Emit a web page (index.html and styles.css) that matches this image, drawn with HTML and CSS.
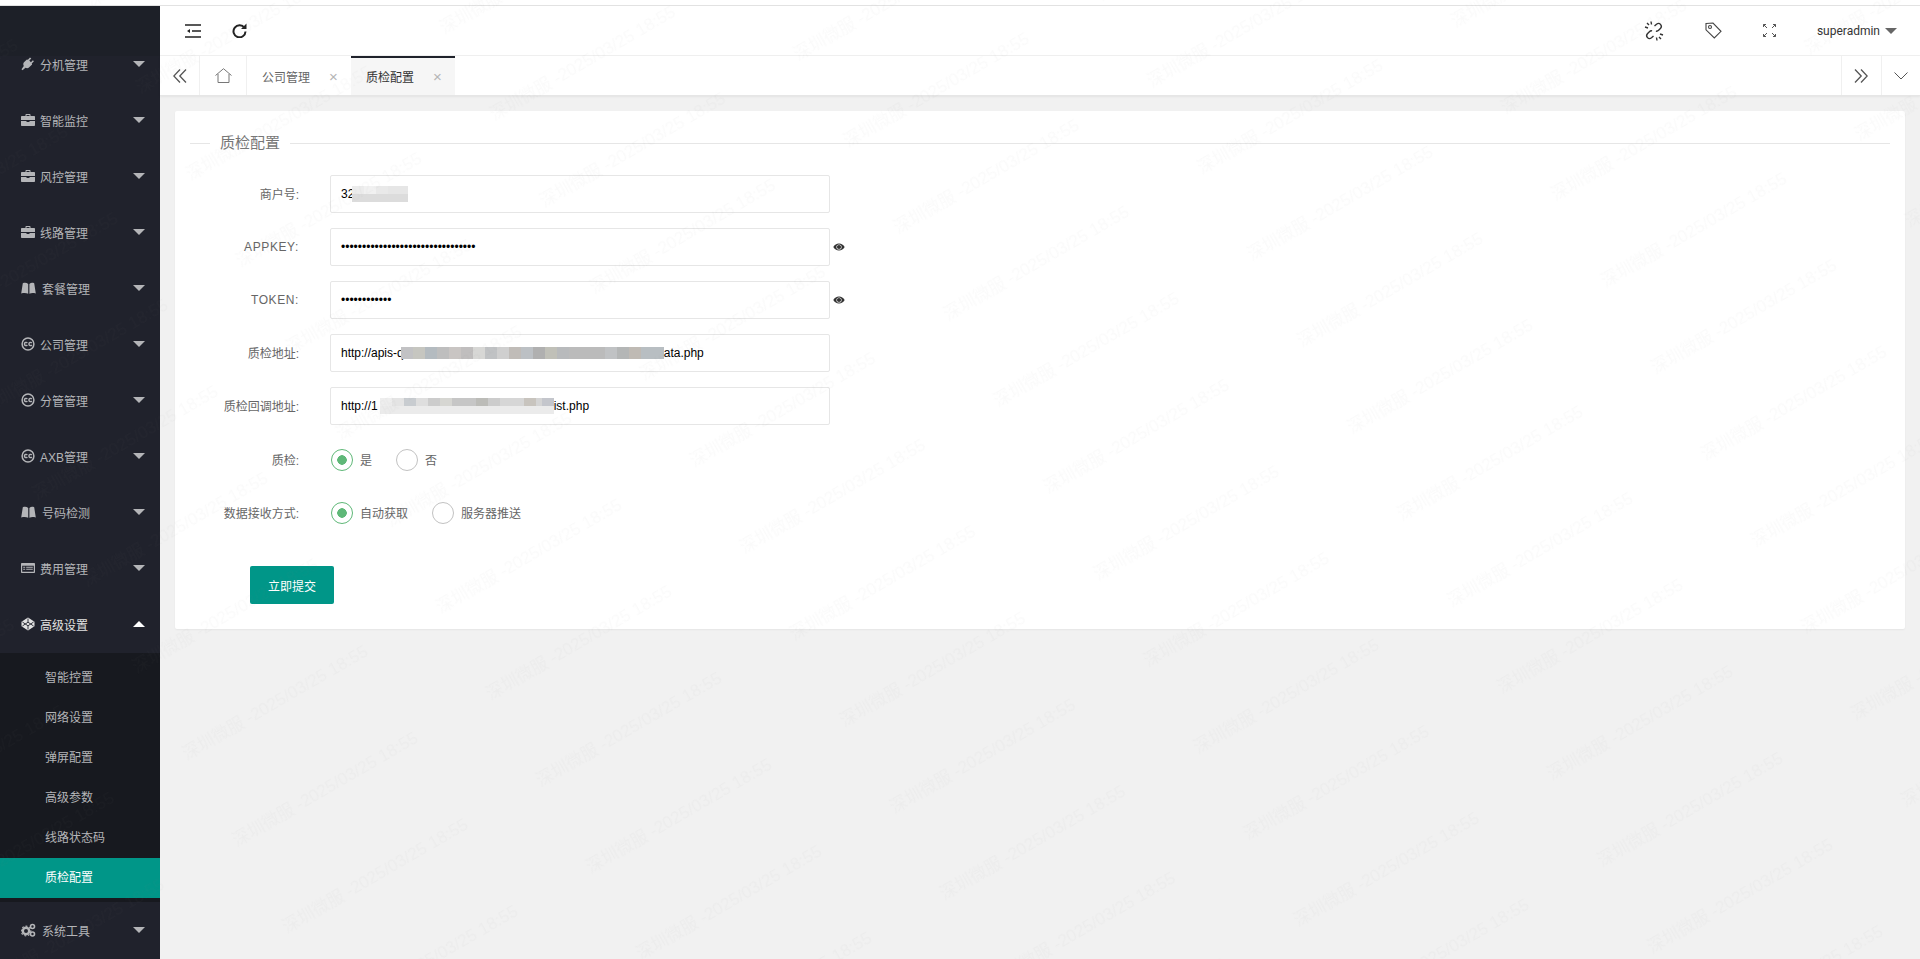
FILE: index.html
```html
<!DOCTYPE html>
<html lang="zh-CN">
<head>
  <meta charset="UTF-8">
  <title>质检配置</title>
  <link rel="stylesheet" href="styles.css">
</head>
<body>

<svg class="sprites" aria-hidden="true">
  <symbol id="i-plug" viewBox="0 0 14 14">
    <path d="M9 .6 6.9 2.7l-1-.3L3 5.3c-.9 1-.9 2.6-.2 3.6L.5 12.3l1 1 3-2.6c1.1.7 2.700.6 3.700-.4l2.900-2.900-.3-1 2.100-2.200-1-1-2 2-1.600-1.600 2-2z" fill="currentColor"/>
  </symbol>
  <symbol id="i-case" viewBox="0 0 14 14">
    <path d="M4.500 3V1.700c0-.4.300-.7.700-.7h3.600c.4 0 .7.300.7.700V3H13c.6 0 1 .4 1 1v3H0V4c0-.6.400-1 1-1zM5.500 3h3V2h-3zM0 8h5.500v1h3V8H14v4c0 .6-.4 1-1 1H1c-.6 0-1-.4-1-1z" fill="currentColor"/>
  </symbol>
  <symbol id="i-book" viewBox="0 0 15 14">
    <path d="M.2 12.500 1.800 2.300C3.600 1.500 5.800 1.700 7.200 3v9.800c-1.800-.9-4.300-1-7-.3zM8.400 3c1.300-1.300 3-1.500 4.800-.7l1.600 10.200c-2.600-.7-4.600-.6-6.400.3z" fill="currentColor"/>
  </symbol>
  <symbol id="i-cc" viewBox="0 0 14 14">
    <circle cx="7" cy="7" r="5.900" fill="none" stroke="currentColor" stroke-width="1.500"/>
    <path d="M6.300 6c-.8-1-2.900-.7-2.900 1s2.100 2 2.900 1M10.800 6c-.8-1-2.900-.7-2.900 1s2.100 2 2.900 1" fill="none" stroke="currentColor" stroke-width="1.400"/>
  </symbol>
  <symbol id="i-list" viewBox="0 0 14 14">
    <path d="M1 2h12c.6 0 1 .4 1 1v8c0 .6-.4 1-1 1H1c-.6 0-1-.4-1-1V3c0-.6.400-1 1-1zm.2 2.800v6h11.600v-6zm1 1h2v1h-2zm3 0h6.600v1H5.200zm-3 2h2v1h-2zm3 0h6.600v1H5.200z" fill="currentColor" fill-rule="evenodd"/>
  </symbol>
  <symbol id="i-pen" viewBox="0 0 14 14">
    <path d="M7 .5 13.500 4.700v4.600L7 13.500.5 9.300V4.700z" fill="currentColor"/>
    <path d="M7 1.500v3.700M7 8.800v3.700M1.400 5 7 8.800 12.600 5M1.400 9 7 5.200 12.600 9" fill="none" stroke="#20222c" stroke-width=".9"/>
  </symbol>
  <symbol id="i-cogs" viewBox="0 0 15 14">
    <circle cx="5" cy="8" r="3.200" fill="none" stroke="currentColor" stroke-width="2.400"/>
    <circle cx="5" cy="8" r="4.800" fill="none" stroke="currentColor" stroke-width="1.200" stroke-dasharray="1.800 1.800"/>
    <circle cx="11.500" cy="3.500" r="2" fill="none" stroke="currentColor" stroke-width="1.600"/>
    <circle cx="11.500" cy="11" r="2" fill="none" stroke="currentColor" stroke-width="1.600"/>
  </symbol>
  <symbol id="i-eye" viewBox="0 0 12 12">
    <path d="M.3 6C1.500 3.800 3.600 2.500 6 2.500S10.500 3.800 11.700 6c-1.200 2.200-3.300 3.500-5.700 3.500S1.500 8.200.3 6zm3.100 0a2.600 2.600 0 1 0 5.200 0 2.600 2.600 0 1 0-5.200 0z" fill="currentColor" fill-rule="evenodd"/>
    <circle cx="6" cy="6" r="2.100" fill="currentColor"/>
  </symbol>
</svg>

<div class="top-strip"></div>

<div class="app">
  <aside class="sidebar">
    <ul class="nav">
      <li class="nav-item"><svg class="nav-icon"><use href="#i-plug"/></svg>分机管理<i class="caret"></i></li>
      <li class="nav-item"><svg class="nav-icon"><use href="#i-case"/></svg>智能监控<i class="caret"></i></li>
      <li class="nav-item"><svg class="nav-icon"><use href="#i-case"/></svg>风控管理<i class="caret"></i></li>
      <li class="nav-item"><svg class="nav-icon"><use href="#i-case"/></svg>线路管理<i class="caret"></i></li>
      <li class="nav-item"><svg class="nav-icon wide"><use href="#i-book"/></svg>套餐管理<i class="caret"></i></li>
      <li class="nav-item"><svg class="nav-icon"><use href="#i-cc"/></svg>公司管理<i class="caret"></i></li>
      <li class="nav-item"><svg class="nav-icon"><use href="#i-cc"/></svg>分管管理<i class="caret"></i></li>
      <li class="nav-item"><svg class="nav-icon"><use href="#i-cc"/></svg>AXB管理<i class="caret"></i></li>
      <li class="nav-item"><svg class="nav-icon wide"><use href="#i-book"/></svg>号码检测<i class="caret"></i></li>
      <li class="nav-item"><svg class="nav-icon"><use href="#i-list"/></svg>费用管理<i class="caret"></i></li>
      <li class="nav-item open"><svg class="nav-icon"><use href="#i-pen"/></svg>高级设置<i class="caret up"></i></li>
      <li>
        <ul class="subnav">
          <li class="subnav-item">智能控置</li>
          <li class="subnav-item">网络设置</li>
          <li class="subnav-item">弹屏配置</li>
          <li class="subnav-item">高级参数</li>
          <li class="subnav-item">线路状态码</li>
          <li class="subnav-item active">质检配置</li>
        </ul>
      </li>
      <li class="nav-item"><svg class="nav-icon wide"><use href="#i-cogs"/></svg>系统工具<i class="caret"></i></li>
    </ul>
  </aside>

  <main class="main">
    <header class="header">
      <svg class="tool first" width="16" height="14" viewBox="0 0 16 14" fill="none" stroke="#222" stroke-width="1.500">
        <path d="M0 1h16M7 7h9M0 13h16"/>
        <path d="M5 5 2 7l3 2z" fill="#222" stroke="none"/>
      </svg>
      <svg class="tool refresh" width="15" height="15" viewBox="0 0 15 15" fill="none" stroke="#222" stroke-width="2">
        <path d="M12.500 5A6 6 0 1 0 13.500 8.500"/>
        <path d="M14.500.5V6H9z" fill="#222" stroke="none"/>
      </svg>
      <div class="spacer"></div>
      <svg class="tool" width="20" height="20" viewBox="0 0 20 20" fill="none" stroke="#333" stroke-width="1.400">
        <path d="M10.500 5 12.500 3.200c1.300-1 3-.9 4 .2s1.100 2.700.1 3.900L14.600 9.300c-.8.800-1.800 1-2.700.8"/>
        <path d="M9.500 15 7.500 16.800c-1.300 1-3 .9-4-.2s-1.100-2.700-.1-3.900l2-2c.8-.8 1.800-1 2.700-.8"/>
        <path d="M7 .5 7.500 3.500M1 6l3 1M13 19.500l-.5-3M19 14l-3-1M3 2l2 2M17 18l-2-2"/>
      </svg>
      <svg class="tool tag" width="17" height="17" viewBox="0 0 17 17" fill="none" stroke="#444" stroke-width="1.100">
        <path d="M1 1.500 8 1l8 8.300L9.300 16 1 7.800z"/>
        <circle cx="5" cy="5" r="1.500"/>
      </svg>
      <svg class="tool full" width="13" height="13" viewBox="0 0 13 13" fill="none" stroke="#555" stroke-width="1">
        <path d="M.5 3V.5H3M.5.5 4 4M10 .5h2.500V3M12.500.5 9 4M.5 10v2.500H3M.5 12.500 4 9M10 12.500h2.500V10M12.500 12.500 9 9"/>
      </svg>
      <span class="user">superadmin<i class="user-caret"></i></span>
    </header>

    <nav class="tabs">
      <div class="tab-btn">
        <svg width="14" height="14" viewBox="0 0 14 14" fill="none" stroke="#555" stroke-width="1.300"><path d="M7 .5.800 7 7 13.500M13 .5 6.800 7l6.200 6.500"/></svg>
      </div>
      <div class="tab-btn home">
        <svg width="17" height="15" viewBox="0 0 17 15" fill="none" stroke="#777" stroke-width="1"><path d="M.5 7.500 8.500.7l8 6.800M3 6v8.500h11V6"/></svg>
      </div>
      <div class="tab">公司管理<span class="tab-close">×</span></div>
      <div class="tab active">质检配置<span class="tab-close">×</span></div>
      <div class="spacer"></div>
      <div class="tab-btn right">
        <svg class="more" width="14" height="14" viewBox="0 0 14 14" fill="none" stroke="#555" stroke-width="1.300"><path d="M7 .5 13.200 7 7 13.500M1 .5 7.200 7 1 13.500"/></svg>
      </div>
      <div class="tab-btn right last">
        <svg width="14" height="8" viewBox="0 0 14 8" fill="none" stroke="#555" stroke-width="1"><path d="M.5.500 7 7 13.500.5"/></svg>
      </div>
    </nav>

    <section class="content">
      <div class="card">
        <fieldset class="panel">
          <legend class="panel-title">质检配置</legend>
          <form class="form">
            <div class="form-row">
              <label class="form-label cjk">商户号:</label>
              <div class="input">32<span class="mosaic m-short"></span></div>
            </div>
            <div class="form-row">
              <label class="form-label latin">APPKEY:</label>
              <input class="input" type="password" value="aaaaaaaaaaaaaaaaaaaaaaaaaaaaaaaa">
              <svg class="eye"><use href="#i-eye"/></svg>
            </div>
            <div class="form-row">
              <label class="form-label latin">TOKEN:</label>
              <input class="input" type="password" value="aaaaaaaaaaaa">
              <svg class="eye"><use href="#i-eye"/></svg>
            </div>
            <div class="form-row">
              <label class="form-label cjk">质检地址:</label>
              <div class="input">http://apis-q<span class="mosaic m-long"></span>ata.php</div>
            </div>
            <div class="form-row">
              <label class="form-label cjk">质检回调地址:</label>
              <div class="input">http://1<span class="mosaic m-mid"></span>ist.php</div>
            </div>
            <div class="form-row radios">
              <label class="form-label">质检:</label>
              <span class="radio on">是</span>
              <span class="radio">否</span>
            </div>
            <div class="form-row radios">
              <label class="form-label">数据接收方式:</label>
              <span class="radio on">自动获取</span>
              <span class="radio">服务器推送</span>
            </div>
            <button class="submit" type="button">立即提交</button>
          </form>
        </fieldset>
      </div>
    </section>
  </main>
</div>

<svg class="watermark" aria-hidden="true">
  <pattern id="wm" width="293" height="100" patternUnits="userSpaceOnUse" patternTransform="translate(1100.500 584.700) rotate(-30)">
    <text class="wm-text" x="0" y="95">深圳微服 -2025/03/25 18:55</text>
  </pattern>
  <rect width="100%" height="100%" fill="url(#wm)"/>
</svg>

</body>
</html>
```

FILE: styles.css
```css
* {
  box-sizing: border-box;
}
html, body {
  height: 100%;
}
body {
  margin: 0;
  display: flex;
  flex-direction: column;
  overflow: hidden;
  background: #fff;
  color: #666;
  font-family: "Liberation Sans", "Noto Sans CJK SC", sans-serif;
  font-size: 12px;
}
ul {
  list-style: none;
  margin: 0;
  padding: 0;
}
.sprites {
  position: absolute;
  width: 0;
  height: 0;
}
.spacer {
  flex: 1;
}
.top-strip {
  height: 6px;
  flex: none;
  border-bottom: 1px solid #e2e2e2;
}
.app {
  flex: 1;
  display: flex;
  min-height: 0;
}

/* sidebar */
.sidebar {
  width: 160px;
  flex: none;
  padding-top: 30px;
  overflow: hidden;
  background: linear-gradient(#1d2028 50px, #20222c 50px);
  color: #b4b5b8;
}
.nav-item {
  height: 56px;
  display: flex;
  align-items: center;
  padding: 0 15px 0 21px;
}
.nav-item.open {
  color: #e2e2e2;
}
.nav-icon {
  width: 14px;
  height: 14px;
  margin-right: 5px;
  flex: none;
}
.nav-icon.wide {
  width: 15px;
  margin-right: 6px;
}
.caret {
  margin-left: auto;
  width: 0;
  height: 0;
  border-left: 6px solid transparent;
  border-right: 6px solid transparent;
  border-top: 6px solid currentColor;
}
.caret.up {
  border-top: 0;
  border-bottom: 6px solid #fff;
}
.subnav {
  margin-top: 1px;
  padding: 5px 0 4px;
  background: #17191f;
}
.subnav-item {
  height: 40px;
  line-height: 40px;
  padding-left: 45px;
}
.subnav-item.active {
  background: #009688;
  color: #fff;
}

/* header and tabs */
.main {
  flex: 1;
  display: flex;
  flex-direction: column;
  min-width: 0;
}
.header {
  height: 50px;
  flex: none;
  display: flex;
  align-items: center;
  padding-right: 23px;
  border-bottom: 1px solid #f0f0f0;
  color: #333;
}
.tool {
  flex: none;
}
.tool.first {
  margin-left: 25px;
}
.tool.refresh {
  margin-left: 31px;
}
.tool.tag {
  margin-left: 41px;
}
.tool.full {
  margin-left: 41px;
}
.user {
  display: flex;
  align-items: center;
  margin-left: 41px;
  font-family: Roboto, "Liberation Sans", sans-serif;
}
.user-caret {
  width: 0;
  height: 0;
  margin-left: 5px;
  border-left: 6px solid transparent;
  border-right: 6px solid transparent;
  border-top: 6px solid #666;
}
.tabs {
  height: 40px;
  flex: none;
  display: flex;
  border-bottom: 1px solid #e6e6e6;
  box-shadow: 0 1px 2px rgba(0, 0, 0, 0.06);
  position: relative;
}
.tab-btn {
  width: 40px;
  flex: none;
  display: flex;
  align-items: center;
  justify-content: center;
  border-right: 1px solid #f0f0f0;
}
.tab-btn.home {
  width: 47px;
}
.tab-btn.right {
  border-right: 0;
  border-left: 1px solid #f0f0f0;
}
.tab-btn.last {
  width: 39px;
}
.more {
  margin-right: 2px;
}
.tab {
  width: 104px;
  flex: none;
  display: flex;
  align-items: center;
  padding-left: 15px;
  border-top: 2px solid transparent;
  white-space: nowrap;
}
.tab.active {
  background: #f6f6f6;
  border-top-color: #1f222b;
  color: #333;
}
.tab-close {
  margin-left: 19px;
  color: #b5b5b5;
  font-size: 15px;
  line-height: 1;
}

/* form card */
.content {
  flex: 1;
  padding: 15px;
  background: #f1f1f1;
}
.card {
  height: 518px;
  padding: 20px 15px 0;
  border-radius: 2px;
  background: #fff;
  box-shadow: 0 1px 2px rgba(0, 0, 0, 0.05);
}
.panel {
  margin: 0;
  padding: 20px 0 0;
  border: 0;
  border-top: 1px solid #e6e6e6;
}
.panel-title {
  margin-left: 20px;
  padding: 0 10px;
  font-size: 15px;
  line-height: 24px;
  color: #777;
}
.form-row {
  height: 38px;
  margin-bottom: 15px;
  display: flex;
  align-items: center;
}
.form-label {
  width: 109px;
  margin-right: 31px;
  flex: none;
  text-align: right;
}
.form-label.cjk {
  padding-bottom: 2px;
}
.form-label.latin {
  letter-spacing: 0.6px;
}
.input {
  width: 500px;
  height: 38px;
  padding: 0 10px;
  display: flex;
  align-items: center;
  border: 1px solid #e6e6e6;
  border-radius: 2px;
  outline: none;
  background: #fff;
  color: #000;
  font-family: inherit;
  font-size: 12px;
  white-space: pre;
}
.mosaic {
  display: block;
  flex: none;
}
.m-short {
  width: 56px;
  height: 16px;
  margin-left: -2px;
  background: linear-gradient(90deg, #ececec 0 12px, #f1f1f1 12px 24px, #e9e9e9 24px 36px, #e6e6e6 36px);
  background-size: 100% 8px;
  background-repeat: no-repeat;
  box-shadow: inset 0 -8px 0 #dcdcdc;
}
.m-long {
  width: 263px;
  height: 12px;
  margin-left: -3px;
  background: linear-gradient(90deg, #c2c2c4 0 12px, #c6c6c0 12px 24px, #b4bbc0 24px 36px, #bebebe 36px 48px, #c9c5c3 48px 60px, #c0bebe 60px 72px, #d7d7d5 72px 84px, #c0c2c4 84px 96px, #cfcfcf 96px 108px, #c0bcb8 108px 120px, #bcc0c4 120px 132px, #b0b0b0 132px 144px, #c0c0b8 144px 156px, #b8babc 156px 168px, #bbb 168px 204px, #c0c2c4 204px 216px, #b4b6b6 216px 228px, #bfbab4 228px 240px, #b8bec2 240px);
}
.m-mid {
  width: 174px;
  height: 16px;
  margin-left: 2px;
  background: linear-gradient(90deg, #eee 0 12px, #e4e4e4 12px 24px, #c8ccd0 24px 36px, #dedede 36px 48px, #ccc 48px 60px, #d6d6d2 60px 72px, #c6c6c6 72px 96px, #bcbcb8 96px 108px, #ccc 108px 120px, #d6d6d6 120px 144px, #c8c4be 144px 156px, #d4d4d4 156px 162px, #c4c6cc 162px);
  background-size: 100% 8px;
  background-repeat: no-repeat;
  box-shadow: inset 0 -8px 0 #ebebeb;
}
.eye {
  width: 12px;
  height: 12px;
  margin-left: 3px;
  color: #333;
}
.radios {
  padding-top: 1px;
}
.radio {
  display: flex;
  align-items: center;
  margin-right: 23px;
}
.radio::before {
  content: "";
  width: 20px;
  height: 20px;
  margin: 0 7px 0 1px;
  border: 1.5px solid #c2c2c2;
  border-radius: 50%;
}
.radio.on::before {
  border-color: #5fb878;
  background: radial-gradient(circle, #5fb878 0 4.5px, transparent 5px);
}
.submit {
  display: block;
  width: 84px;
  height: 38px;
  margin: 35px 0 0 60px;
  border: 0;
  border-radius: 2px;
  background: #009688;
  color: #fff;
  font-family: inherit;
  font-size: 12px;
}

/* tiled watermark laid over the whole page */
.watermark {
  position: fixed;
  inset: 0;
  width: 100%;
  height: 100%;
  pointer-events: none;
}
.wm-text {
  font-size: 17px;
  fill: rgba(120, 120, 120, 0.04);
}
```
